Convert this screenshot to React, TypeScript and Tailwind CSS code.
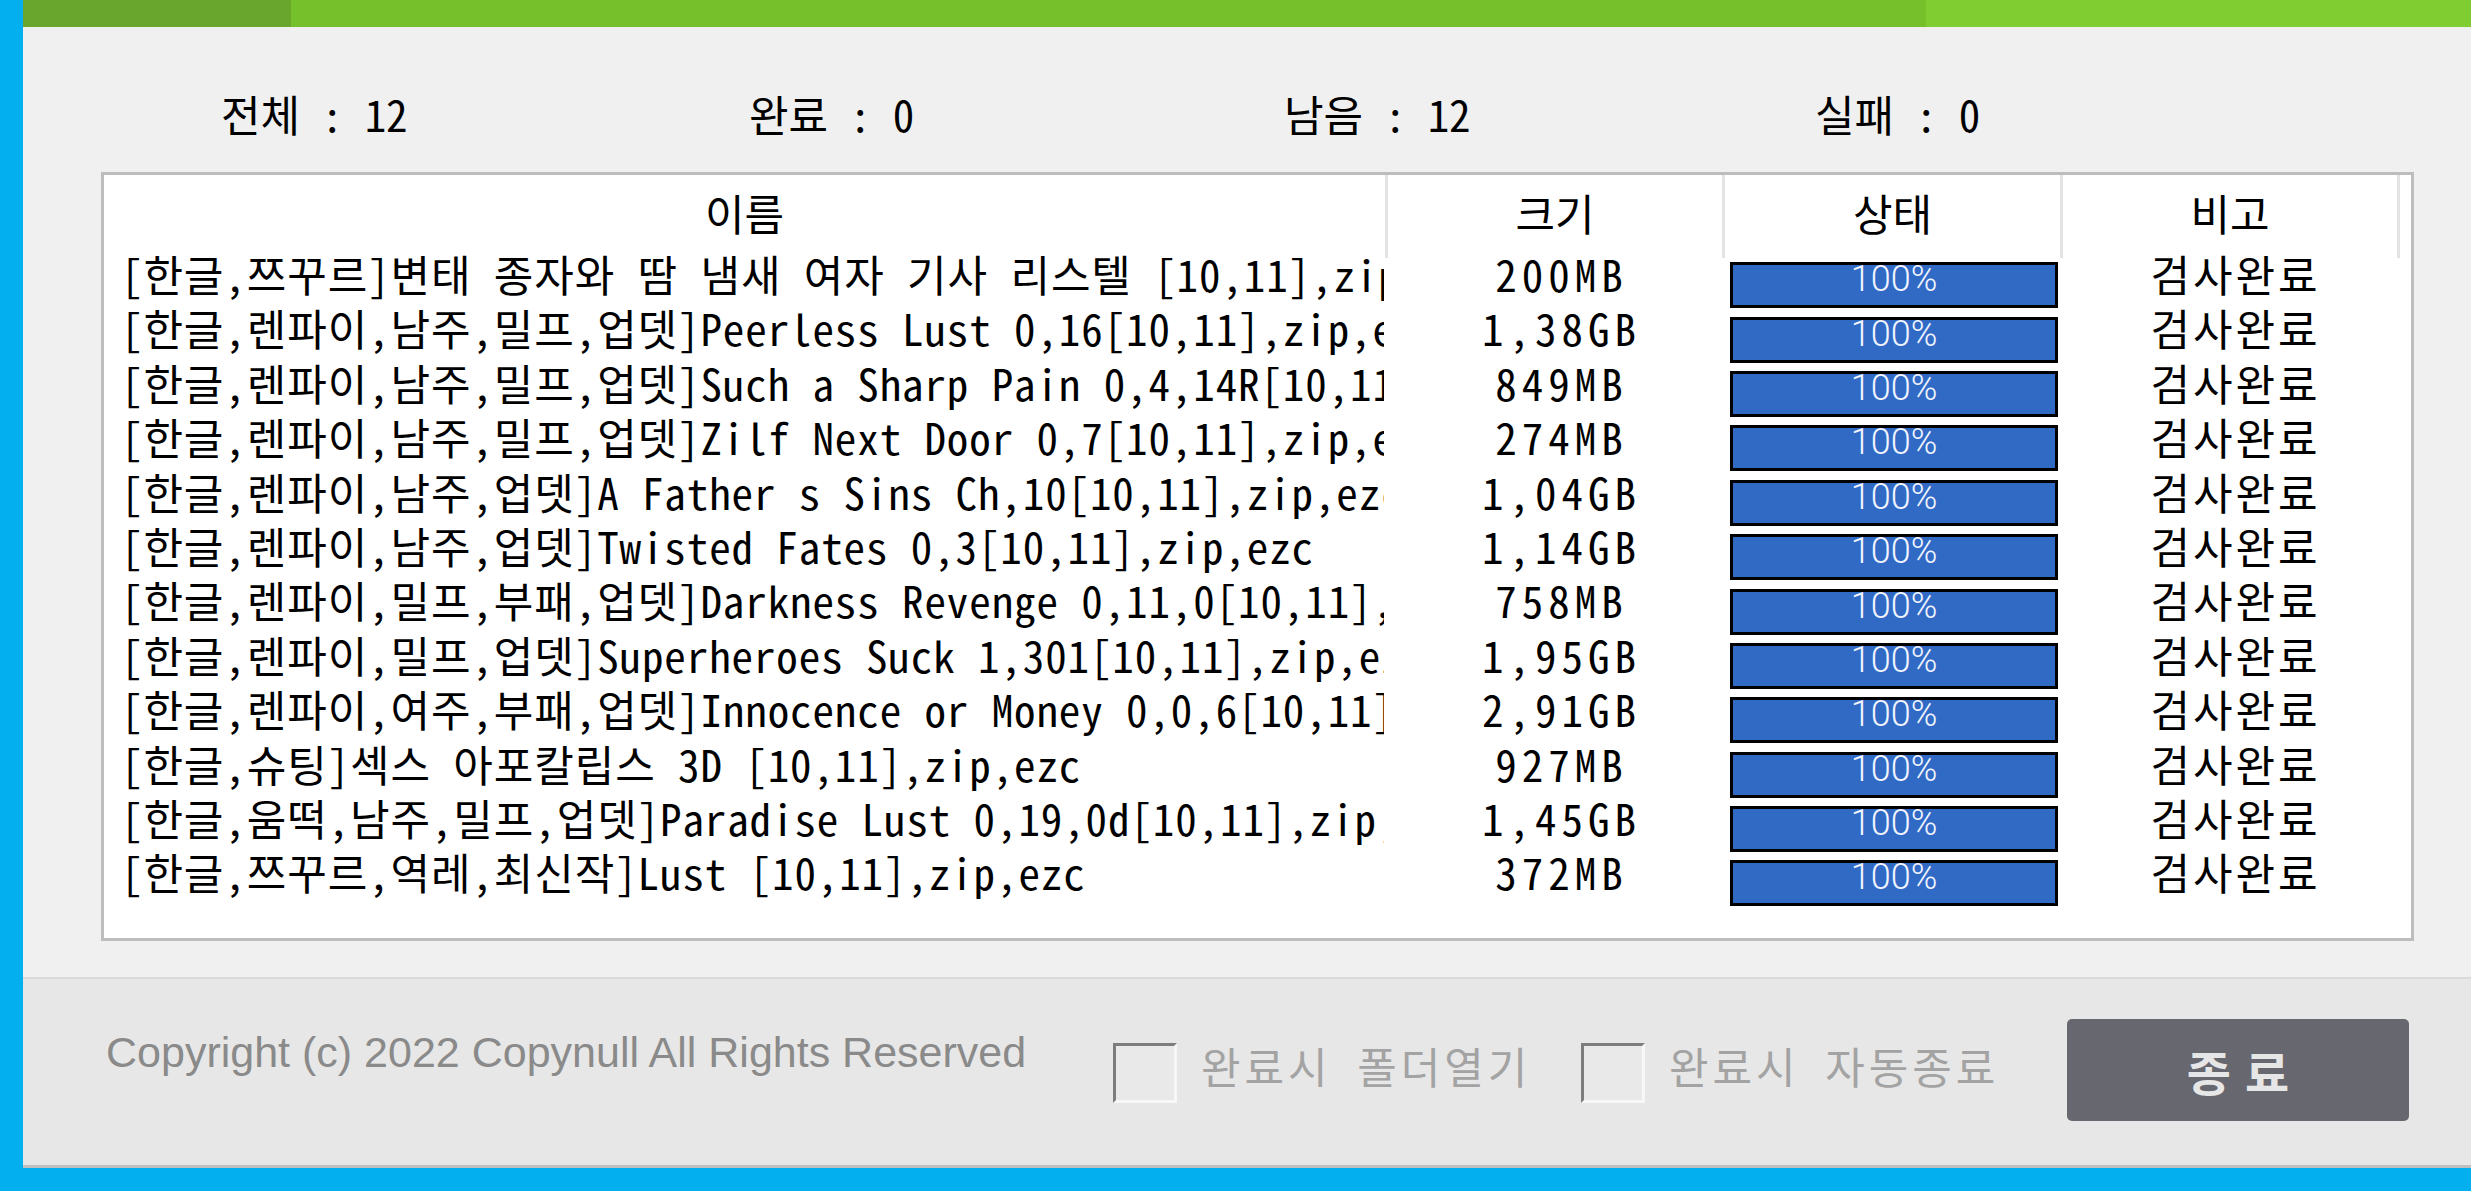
const rows = [
  { name: "[한글,쯔꾸르]변태 종자와 땀 냄새 여자 기사 리스텔 [10,11],zip,ezc", size: "200MB" },
  { name: "[한글,렌파이,남주,밀프,업뎃]Peerless Lust 0,16[10,11],zip,ezc", size: "1,38GB" },
  { name: "[한글,렌파이,남주,밀프,업뎃]Such a Sharp Pain 0,4,14R[10,11],zip,ezc", size: "849MB" },
  { name: "[한글,렌파이,남주,밀프,업뎃]Zilf Next Door 0,7[10,11],zip,ezc", size: "274MB" },
  { name: "[한글,렌파이,남주,업뎃]A Father s Sins Ch,10[10,11],zip,ezc", size: "1,04GB" },
  { name: "[한글,렌파이,남주,업뎃]Twisted Fates 0,3[10,11],zip,ezc", size: "1,14GB" },
  { name: "[한글,렌파이,밀프,부패,업뎃]Darkness Revenge 0,11,0[10,11],zip,ezc", size: "758MB" },
  { name: "[한글,렌파이,밀프,업뎃]Superheroes Suck 1,301[10,11],zip,ezc", size: "1,95GB" },
  { name: "[한글,렌파이,여주,부패,업뎃]Innocence or Money 0,0,6[10,11],zip,ezc", size: "2,91GB" },
  { name: "[한글,슈팅]섹스 아포칼립스 3D [10,11],zip,ezc", size: "927MB" },
  { name: "[한글,움떡,남주,밀프,업뎃]Paradise Lust 0,19,0d[10,11],zip,ezc", size: "1,45GB" },
  { name: "[한글,쯔꾸르,역레,최신작]Lust [10,11],zip,ezc", size: "372MB" },
];

const gulim = "font-['Noto_Sans_Mono_CJK_KR','Noto_Sans_CJK_KR',sans-serif]";

function Stat({ label, value, width }: { label: string; value: number; width: string }) {
  return (
    <div className={`${width} text-[43px] leading-[44px] text-black`}>
      {label} : {value}
    </div>
  );
}

function Checkbox() {
  return (
    <div className="h-[60px] w-[64px] shrink-0 border-[3px] border-t-[#7d7d7d] border-l-[#7d7d7d] border-r-[#f7f7f7] border-b-[#f7f7f7] bg-[#e9e9e9]" />
  );
}

export default function App() {
  return (
    <div className={`h-[1191px] w-[2471px] overflow-hidden bg-[#04aff0] pb-[23px] pl-[23px] ${gulim}`}>
      <div className="flex h-full w-full flex-col bg-[#f0f0f0]">
        {/* progress strip */}
        <div className="flex h-[27px] shrink-0">
          <div className="w-[268px] bg-[#69a62e]" />
          <div className="w-[1635px] bg-[#76c02b]" />
          <div className="flex-1 bg-[#80cd31]" />
        </div>

        {/* counters */}
        <div className="flex h-[145px] shrink-0 items-start pl-[198px] pt-[64px]">
          <Stat label="전체" value={12} width="w-[528px]" />
          <Stat label="완료" value={0} width="w-[535px]" />
          <Stat label="남음" value={12} width="w-[531px]" />
          <Stat label="실패" value={0} width="w-[300px]" />
        </div>

        {/* list */}
        <div className="ml-[78px] flex h-[769px] w-[2313px] shrink-0 flex-col border-[3px] border-[#bdbdbd] bg-white">
          <div className="flex h-[83px] shrink-0 text-[43px] text-black">
            <div className="flex w-[1284px] items-center justify-center border-r-[3px] border-[#e3e3e3] pb-[8px]">이름</div>
            <div className="flex w-[337px] items-center justify-center border-r-[3px] border-[#e3e3e3] pb-[8px]">크기</div>
            <div className="flex w-[338px] items-center justify-center border-r-[3px] border-[#e3e3e3] pb-[8px]">상태</div>
            <div className="flex w-[337px] items-center justify-center border-r-[3px] border-[#e3e3e3] pb-[8px]">비고</div>
          </div>

          {rows.map((r) => (
            <div key={r.name} className="flex h-[54.4px] shrink-0 items-start text-[43px] leading-[30px] text-black">
              <div className="w-[1284px]">
                <div className="w-[1280px] overflow-x-clip whitespace-nowrap pl-[17px] tracking-[0.9px]">{r.name}</div>
              </div>
              <div className="flex w-[337px] justify-center pl-[10px] tracking-[5px]">{r.size}</div>
              <div className="flex h-full w-[338px] items-center pl-[5px]">
                <div className="flex h-[46px] w-[328px] items-start justify-center border-[3px] border-black bg-[#316ac5]">
                  <span className="-mt-[4px] font-['Roboto',sans-serif] text-[36px] font-light leading-[36px] text-[#f2f5ff]">
                    100%
                  </span>
                </div>
              </div>
              <div className="flex w-[337px] justify-center pl-[8px] tracking-[3px]">검사완료</div>
            </div>
          ))}
        </div>

        <div className="h-[36px] shrink-0" />

        {/* footer */}
        <div className="flex h-[191px] shrink-0 items-start border-t-[2px] border-b-[3px] border-t-[#dadada] border-b-[#bfbfbf] bg-[#e7e7e7] pl-[83px]">
          <div className="mt-[48px] w-[1007px] font-['Liberation_Sans',sans-serif] text-[43px] leading-[50px] text-[#8a8a8a]">
            Copyright (c) 2022 Copynull All Rights Reserved
          </div>
          <div className="mt-[64px] flex items-start">
            <Checkbox />
            <div className="ml-[24px] w-[380px] text-[43px] leading-[44px] tracking-[4px] text-[#a3a3a3]">완료시 폴더열기</div>
            <Checkbox />
            <div className="ml-[24px] w-[398px] text-[43px] leading-[44px] tracking-[4px] text-[#a3a3a3]">완료시 자동종료</div>
          </div>
          <button className="mt-[40px] flex h-[102px] w-[342px] items-center justify-center rounded-[5px] bg-[#67676f] pl-[14px] font-['Noto_Sans_CJK_KR',sans-serif] text-[48px] font-bold tracking-[14px] text-[#e6e6e6]">
            종료
          </button>
        </div>
      </div>
    </div>
  );
}
